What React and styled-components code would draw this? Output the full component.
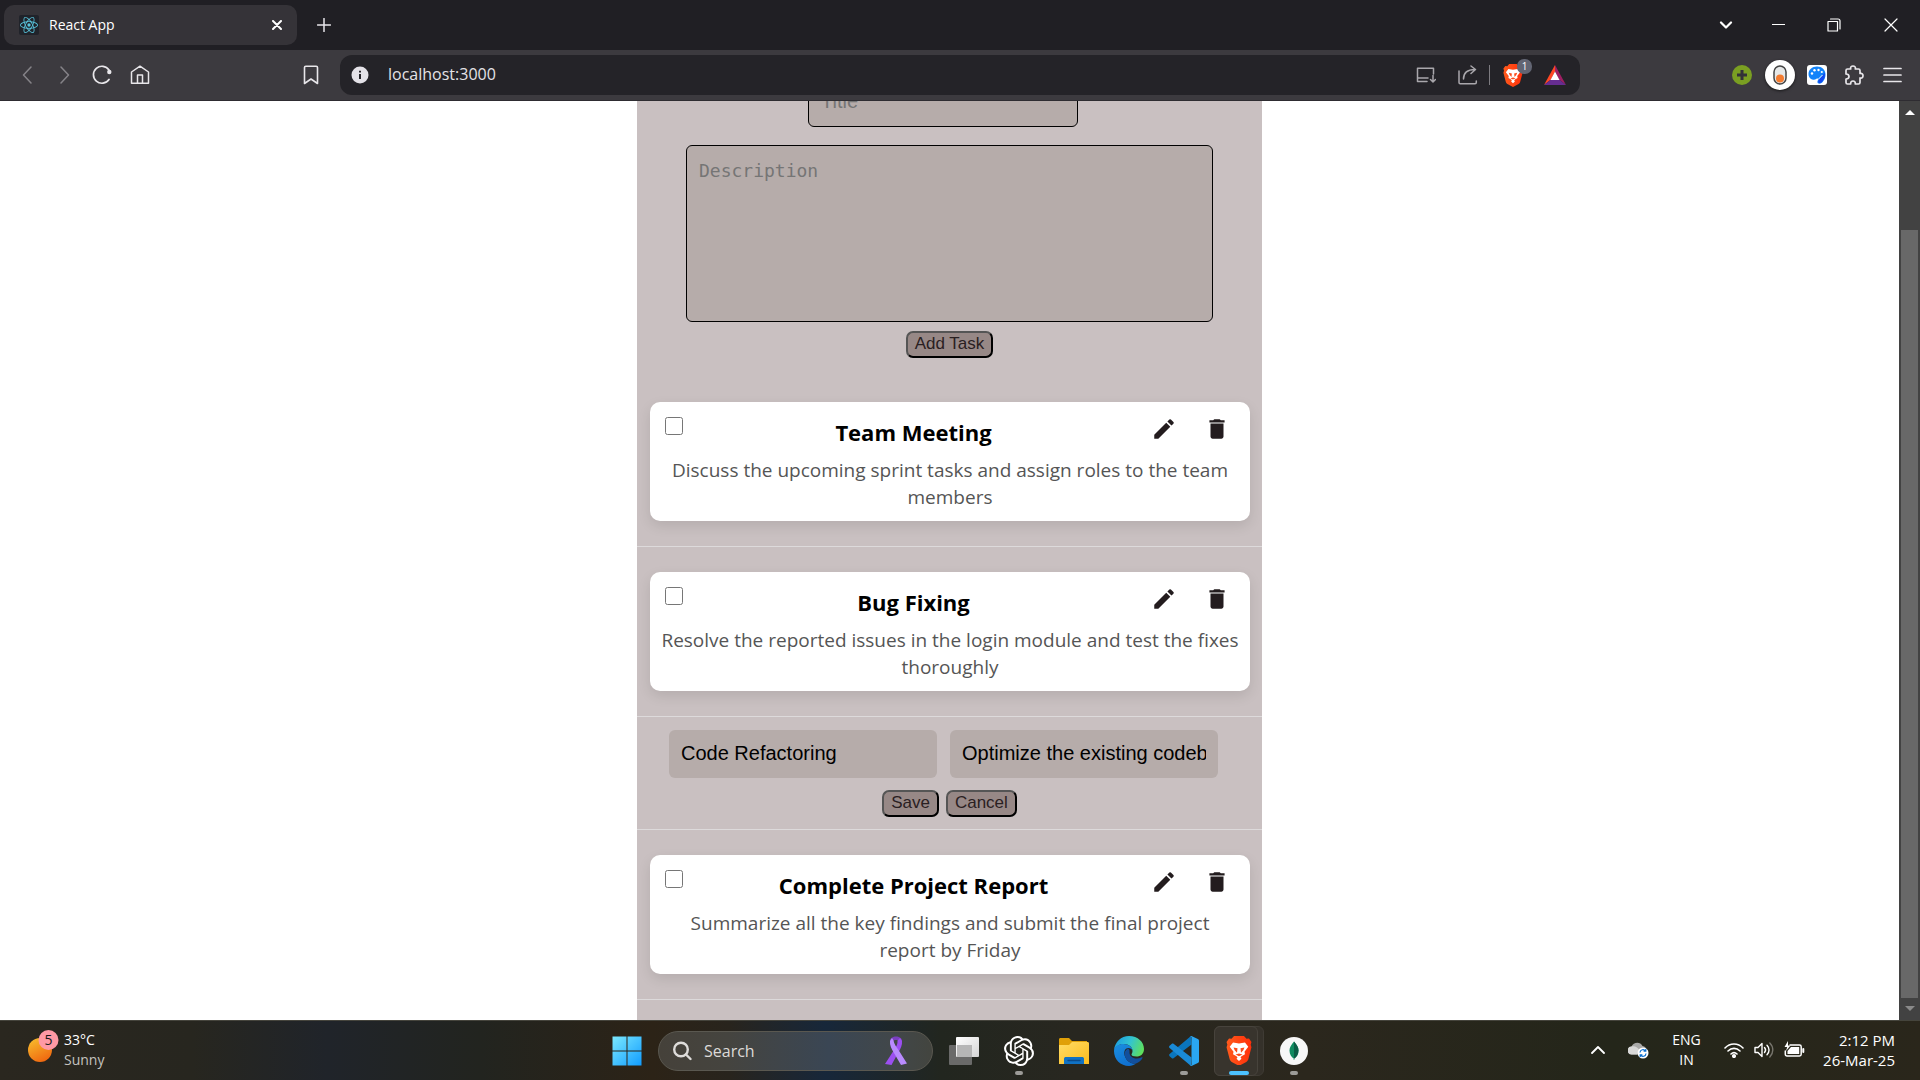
import React, { useState } from "react";
import styled, { createGlobalStyle } from "styled-components";
import { MdEdit, MdDelete } from "react-icons/md";
import { SiOpenai, SiReact } from "react-icons/si";

const ui = `"Open Sans", "Noto Sans", sans-serif`;
const arial = `"Liberation Sans", Arial, sans-serif`;

const GlobalStyle = createGlobalStyle`
  *, *::before, *::after { box-sizing: border-box; }
  body { margin: 0; background: #fff; font-family: ${ui}; }
  button { font: inherit; color: inherit; }
  svg { display: block; flex: none; }
`;

const Desktop = styled.div`
  display: flex;
  flex-direction: column;
  height: 100vh;
  overflow: hidden;
`;

/* ---------- browser chrome ---------- */

const TabStrip = styled.header`
  display: flex;
  align-items: center;
  height: 50px;
  padding-left: 4px;
  background: #201f24;
  color: #fff;
`;

const Tab = styled.div`
  display: flex;
  align-items: center;
  gap: 10px;
  width: 293px;
  height: 40px;
  padding: 0 8px 0 15px;
  border-radius: 10px;
  background: #353338;
  font-size: 14px;
  line-height: 20px;
`;

const TabTitle = styled.span`
  flex: 1;
`;

const Favicon = styled.span`
  display: grid;
  place-items: center;
  width: 20px;
  height: 20px;
  border-radius: 2px;
  background: #20232a;
  color: #58c4dc;
`;

const IconButton = styled.button`
  display: grid;
  place-items: center;
  width: ${(p) => p.$w || 38}px;
  height: ${(p) => p.$h || 40}px;
  padding: 0;
  border: 0;
  background: none;
  color: ${(p) => p.$color || "#e8e6ea"};
`;

const NewTab = styled.div`
  flex: 1;
  padding-left: 8px;
`;

const WindowControls = styled.div`
  display: flex;
`;

const Toolbar = styled.nav`
  display: flex;
  align-items: center;
  height: 51px;
  padding: 0 9px 0 8px;
  background: #3c3a3f;
  border-bottom: 1px solid #2e2c31;
`;

const NavGroup = styled.div`
  display: flex;
  flex: none;
  width: 332px;
  justify-content: space-between;
  padding-right: 10px;
`;

const NavButtons = styled.div`
  display: flex;
`;

const AddressBar = styled.div`
  display: flex;
  flex: 1;
  align-items: center;
  height: 40px;
  padding: 0 6px 0 11px;
  border-radius: 12px;
  background: #242328;
`;

const AddressInput = styled.input`
  flex: 1;
  min-width: 0;
  padding: 0 0 2px;
  margin-left: 19px;
  border: 0;
  background: none;
  color: #e4e2e6;
  font: 16px/24px ${ui};
`;

const Separator = styled.span`
  width: 1px;
  height: 20px;
  background: #7d7b80;
`;

const ShieldWrap = styled.span`
  position: relative;
  display: block;
`;

const Count = styled.span`
  position: absolute;
  top: -5px;
  right: -9px;
  width: 15px;
  height: 15px;
  border-radius: 7px;
  background: #626573;
  color: #fff;
  font-size: 10px;
  line-height: 15px;
  text-align: center;
`;

const Extensions = styled.div`
  display: flex;
  padding-left: 143px;
`;

const ExtensionDisc = styled.span`
  display: grid;
  place-items: center;
  width: 30px;
  height: 30px;
  border-radius: 50%;
  background: #fff;
  box-shadow: 0 1px 3px rgba(0, 0, 0, 0.6);
`;

/* ---------- page ---------- */

const Viewport = styled.div`
  display: flex;
  flex: 1;
  min-height: 0;
`;

const Page = styled.main`
  flex: 1;
  overflow: hidden;
  background: #fff;
`;

const Scrollbar = styled.div`
  display: flex;
  flex-direction: column;
  align-items: center;
  width: 21px;
  background: #424242;
`;

const ScrollArrow = styled.span`
  display: grid;
  place-items: center;
  height: 22px;
`;

const ScrollTrack = styled.div`
  flex: 1;
  width: 17px;
  padding-top: 107px;
`;

const ScrollThumb = styled.div`
  height: 100%;
  background: #686868;
`;

const Panel = styled.section`
  width: 625px;
  min-height: 1000px;
  margin: -24px auto 0;
  background: #c9c0c1;
  text-align: center;
`;

const TaskForm = styled.form`
  display: flex;
  flex-direction: column;
  align-items: center;
  padding-bottom: 19px;
`;

const TitleRow = styled.div`
  display: flex;
  padding-right: 13px;
`;

const TextField = styled.input`
  width: ${(p) => (p.$outlined ? 270 : 268)}px;
  height: ${(p) => (p.$outlined ? 50 : 48)}px;
  padding: 0 12px 2px;
  border: ${(p) => (p.$outlined ? "1px solid #000" : "0")};
  border-radius: 6px;
  background: #b6acaa;
  color: #000;
  font: 20px ${arial};
  &::placeholder { color: #757575; }
`;

const DescriptionField = styled.textarea`
  width: 527px;
  height: 177px;
  margin: 18px 0 9px;
  padding: 13px 12px;
  border: 1px solid #000;
  border-radius: 6px;
  background: #b6acaa;
  font: 18px/24px "DejaVu Sans Mono", monospace;
  resize: none;
  &::placeholder { color: #757575; }
`;

const ActionButton = styled.button`
  height: 27px;
  padding: 0 7px 2px;
  border: 2px outset #000;
  border-color: #555 #000 #000 #555;
  border-radius: 7px;
  background: #978886;
  color: #2a2022;
  font: 17px/20px ${arial};
`;

const TaskList = styled.ul`
  margin: 0;
  padding: 0;
  list-style: none;
`;

const TaskItem = styled.li`
  padding: ${(p) => (p.$editing ? "13px 12px 12px" : "25px 12px 25px 13px")};
  border-bottom: 1px solid #dddadb;
`;

const Card = styled.article`
  padding: 13px 11px 10px;
  border-radius: 10px;
  background: #fff;
  box-shadow: 0 5px 13px rgba(0, 0, 0, 0.1);
`;

const CardHeader = styled.div`
  display: flex;
  align-items: flex-start;
  height: 34px;
  padding: 0 2px 0 1px;
`;

const Check = styled.input`
  width: 18px;
  height: 18px;
  margin: 2px 0 0 3px;
`;

const CardTitle = styled.h3`
  flex: 1;
  margin: 0;
  font-size: 22px;
  line-height: 34px;
  color: #000;
`;

const CardActions = styled.div`
  display: flex;
  gap: 13px;
  padding-top: 1px;
`;

const CardText = styled.p`
  margin: 8px 0 0;
  color: #555;
  font-size: 19px;
  line-height: 27px;
`;

const EditFields = styled.div`
  display: flex;
  justify-content: center;
  gap: 13px;
  padding-right: 12px;
`;

const EditButtons = styled.div`
  display: flex;
  justify-content: center;
  gap: 7px;
  margin-top: 12px;
`;

/* ---------- taskbar ---------- */

const Taskbar = styled.footer`
  display: grid;
  grid-template-columns: 1fr auto 1fr;
  align-items: center;
  height: 60px;
  border-top: 1px solid #45443c;
  background: linear-gradient(90deg, #2a271f 0, #27261f 10%, #20242a 17%, #22241f 25%, #2c2317 34%, #28241d 38%, #17273a 43%, #22261f 49%, #282720 56%, #2b271d 68%, #24261a 84%, #2a261b 100%);
  color: #fff;
  font-size: 14px;
  line-height: 20px;
`;

const Weather = styled.div`
  display: flex;
  align-items: center;
  gap: 5px;
  padding: 0 0 2px 27px;
`;

const WeatherText = styled.div`
  display: flex;
  flex-direction: column;
`;

const Muted = styled.span`
  color: #c4c2bf;
`;

const Apps = styled.div`
  display: flex;
  align-items: center;
`;

const AppButton = styled.button`
  position: relative;
  display: grid;
  place-items: center;
  width: 55px;
  height: 59px;
  padding: 0;
  border: 0;
  background: none;
`;

const AppTile = styled.span`
  position: relative;
  display: grid;
  place-items: center;
  width: 50px;
  height: 50px;
  border: 1px solid #3f3b34;
  border-radius: 6px;
  background: #35312a;
  &::before {
    content: "";
    position: absolute;
    inset: -1px 5px -1px -1px;
    border: 1px solid #47433c;
    border-radius: 6px;
    background: #38342d;
  }
  svg { position: relative; }
`;

const Running = styled.span`
  position: absolute;
  bottom: 5px;
  left: 50%;
  width: ${(p) => (p.$active ? 20 : 8)}px;
  height: 4px;
  border-radius: 2px;
  background: ${(p) => (p.$active ? "#4cc2ff" : "#9c9b98")};
  transform: translateX(-50%);
`;

const SearchBox = styled.label`
  display: flex;
  align-items: center;
  gap: 12px;
  width: 275px;
  height: 40px;
  margin: 0 3px 0 4px;
  padding: 0 25px 0 13px;
  border: 1px solid #5a5850;
  border-radius: 20px;
  background: linear-gradient(90deg, #45413a 0, #45443f 25%, #3a4654 62%, #41474a 85%, #43453f 100%);
`;

const SearchInput = styled.input`
  flex: 1;
  min-width: 0;
  padding: 0;
  border: 0;
  background: none;
  color: #fff;
  font: 16px ${ui};
  &::placeholder { color: #dcdad8; opacity: 1; }
`;

const Tray = styled.div`
  display: flex;
  align-items: center;
  justify-content: flex-end;
  padding: 0 25px 2px 0;
`;

const TrayStack = styled.div`
  display: flex;
  flex-direction: column;
  align-items: ${(p) => p.$align};
  width: ${(p) => p.$w}px;
  font-size: ${(p) => p.$size || 14}px;
  white-space: nowrap;
`;

const TrayIcons = styled.div`
  display: flex;
  align-items: center;
  gap: 10px;
`;

const TrayStart = styled(TrayIcons)`
  gap: 23px;
`;

/* ---------- drawings ---------- */

const Line = ({ w = 20, h = w, box = `0 0 ${w} ${h}`, sw = 1.5, children, ...rest }) => (
  <svg width={w} height={h} viewBox={box} fill="none" stroke="currentColor" strokeWidth={sw} strokeLinecap="round" strokeLinejoin="round" {...rest}>
    {children}
  </svg>
);

const Edge = () => (
  <svg width="30" height="30" viewBox="0 0 30 30">
    <defs>
      <linearGradient id="edgeTop" x1="0" y1="0.3" x2="1" y2="0.6">
        <stop offset="0" stopColor="#1b9de2" />
        <stop offset="0.5" stopColor="#33c4d0" />
        <stop offset="1" stopColor="#5fe05a" />
      </linearGradient>
      <linearGradient id="edgeSide" x1="0" y1="0" x2="0.6" y2="1">
        <stop offset="0" stopColor="#1b8fe0" />
        <stop offset="1" stopColor="#0f6fd0" />
      </linearGradient>
    </defs>
    <path d="M0 14C1 6 7 0 15 0c9 0 15 6 15 13 0 5-3.500 7.500-7.500 7.500-3.500 0-5-1-5-2 0-.8 1-1.500 1-3.500C18.500 11 14.500 8 10 8 5 8 1 11 0 14z" fill="url(#edgeTop)" />
    <path d="M0 15C0 10 5 8 9.500 8c5 0 9 3 9 6.500-1-1.800-2.800-2.500-4-2.500-4 0-5.500 5-3 9.500C13.500 26 18 28 22 27.500c-2 1.500-4.500 2.500-7 2.500C6.500 30 0 23.500 0 15z" fill="url(#edgeSide)" />
    <path d="M14 12.500c-3 1.500-4.500 5-2.500 9 2 4.500 6.500 6.500 10.500 6 3-1 5.300-3 6.500-5.500.3-.8-.2-1-.8-.7-6 3-12.200.2-12.200-4.800 0-1.700.3-3-1.500-4z" fill="#124f9c" />
  </svg>
);

const VSCode = () => (
  <svg width="30" height="30" viewBox="0 0 30 30">
    <path d="M22.500 8.500L4.500 22.300c-.5.400-1.200.3-1.600 0L.6 20.200c-.7-.6-.7-1.600 0-2.200L22 0z" fill="#0a75bd" />
    <path d="M22.500 21.500L4.500 7.700c-.5-.4-1.200-.3-1.600 0L.6 9.800c-.7.6-.7 1.600 0 2.200L22 30z" fill="#1a8ad6" />
    <path d="M22.500 0l6.300 3c.7.300 1.200 1 1.200 1.800v20.400c0 .8-.5 1.500-1.200 1.800l-6.300 3c-.8.300-1.500 0-2-.4 1 .6 2-.1 2-1.100V1.500c0-1-1-1.700-2-1.100.5-.5 1.200-.7 2-.4z" fill="#2aa7f3" />
  </svg>
);

const Explorer = () => (
  <svg width="30" height="28" viewBox="0 0 30 28">
    <defs>
      <linearGradient id="folder" x1="0" y1="0" x2="1" y2="1">
        <stop offset="0" stopColor="#ffdc66" />
        <stop offset="1" stopColor="#fcbc1c" />
      </linearGradient>
    </defs>
    <path d="M0 2.500C0 1.500.7 1 1.500 1H10l3 3h15v6H0z" fill="#e0a008" />
    <path d="M0 8h10l3-3h15.500c1 0 1.500.7 1.500 1.500V27H0z" fill="url(#folder)" />
    <path d="M5 27v-5.500C5 20.500 6 20 7 20h16c1 0 2 .5 2 1.500V27z" fill="#1072c4" />
    <path d="M9 23.500h12" stroke="#0a4a8a" strokeWidth="1.300" strokeLinecap="round" />
  </svg>
);

const WindowsLogo = () => (
  <svg width="30" height="30" viewBox="0 0 30 30">
    <defs>
      <linearGradient id="win" gradientUnits="userSpaceOnUse" x1="0" y1="0" x2="30" y2="30">
        <stop offset="0" stopColor="#7deaff" />
        <stop offset="1" stopColor="#0f9bff" />
      </linearGradient>
    </defs>
    <path d="M.5.500h14v14H.5zM15.500.500h14v14h-14zM.5 15.500h14v14H.5zM15.500 15.500h14v14h-14z" fill="url(#win)" />
  </svg>
);

const Ribbon = () => (
  <svg width="22" height="30" viewBox="0 0 22 30">
    <path d="M5 5C5 2 8 .5 11 .5S17 2 17 5l-2.500 1C14 4.500 12.500 4 11 4s-3 .5-3.500 2z" fill="#7a3fc0" />
    <path d="M17 5c.5 4-1.500 8-4 12L6.500 29 0 28l9-14c2-3 4-6 3.500-9.500L15 2z" fill="#9b4ff0" />
    <path d="M5 5c-.5 4 1.500 8 4 12l7 12 6-1.500L13.500 14C11.500 11 9 8 8.500 4.500L7 2z" fill="#b98bff" />
  </svg>
);

const TaskView = () => (
  <svg width="30" height="28" viewBox="0 0 30 28">
    <defs>
      <linearGradient id="front" x1="0" y1="0" x2="1" y2="1">
        <stop offset="0" stopColor="#fff" />
        <stop offset="1" stopColor="#d5d5d5" />
      </linearGradient>
    </defs>
    <rect x="0" y="8" width="23" height="20" rx="1" fill="#6a6a69" />
    <rect x="7" y="0" width="23" height="20" rx="1" fill="url(#front)" />
    <path d="M8 8h15v12H8z" fill="#b6b6b6" />
  </svg>
);

const BraveApp = ({ size }) => (
  <svg width={size} height={size * 1.15} viewBox="0 0 26 30">
    <defs>
      <linearGradient id="brave" x1="0" y1="0" x2="1" y2="0">
        <stop offset="0" stopColor="#ff5a1c" />
        <stop offset="1" stopColor="#ff2f0a" />
      </linearGradient>
    </defs>
    <path d="M8 0h10l2.500 2.800 2.500-.3 2.500 3.500-.8 2.800.8 2.500-3 11.500c-.4 1.500-1 2.300-2.200 3.200L13 30l-7.300-4c-1.200-.9-1.800-1.700-2.200-3.200L.5 11.300l.8-2.500L.5 6 3 2.500l2.500.3z" fill="url(#brave)" />
    <path d="M7 6.500l6 1 6-1 3.300 4.300-3.800 5 .5 2.400-3.500 2-1 1.300 1 1.300L13 25l-2.500-2.200 1-1.300-1-1.300-3.500-2 .5-2.400-3.800-5z" fill="#fff" />
    <path d="M7.500 11.500l4 .8-.5 4.500-2.300-2.500zM18.500 11.500l-4 .8.5 4.500 2.300-2.500zM9.500 18.500l3.500-1 3.500 1-3.500 1.800z" fill="#fb4a1a" />
  </svg>
);

/* ---------- app ---------- */

const initialTasks = [
  { id: 1, title: "Team Meeting", text: "Discuss the upcoming sprint tasks and assign roles to the team members" },
  { id: 2, title: "Bug Fixing", text: "Resolve the reported issues in the login module and test the fixes thoroughly" },
  { id: 3, title: "Code Refactoring", text: "Optimize the existing codebase", editing: true },
  { id: 4, title: "Complete Project Report", text: "Summarize all the key findings and submit the final project report by Friday" },
];

function Task({ task, onChange, onRemove }) {
  const [title, setTitle] = useState(task.title);
  const [text, setText] = useState(task.text);

  if (task.editing) {
    return (
      <TaskItem $editing>
        <EditFields>
          <TextField aria-label="Title" value={title} onChange={(e) => setTitle(e.target.value)} />
          <TextField aria-label="Description" value={text} onChange={(e) => setText(e.target.value)} />
        </EditFields>
        <EditButtons>
          <ActionButton type="button" onClick={() => onChange({ ...task, title, text, editing: false })}>Save</ActionButton>
          <ActionButton type="button" onClick={() => onChange({ ...task, editing: false })}>Cancel</ActionButton>
        </EditButtons>
      </TaskItem>
    );
  }
  return (
    <TaskItem>
      <Card>
        <CardHeader>
          <Check type="checkbox" aria-label={task.title} />
          <CardTitle>{task.title}</CardTitle>
          <CardActions>
            <IconButton $w={40} $h={26} $color="#231c1e" aria-label="Edit" onClick={() => onChange({ ...task, editing: true })}>
              <MdEdit size={26} />
            </IconButton>
            <IconButton $w={40} $h={26} $color="#231c1e" aria-label="Delete" onClick={onRemove}>
              <MdDelete size={26} />
            </IconButton>
          </CardActions>
        </CardHeader>
        <CardText>{task.text}</CardText>
      </Card>
    </TaskItem>
  );
}

function Browser() {
  return (
    <>
      <TabStrip>
        <Tab>
          <Favicon><SiReact size={18} /></Favicon>
          <TabTitle>React App</TabTitle>
          <IconButton $w={24} $h={24} $color="#fff" aria-label="Close tab">
            <Line w={10} sw={2}><path d="M1 1l8 8M9 1l-8 8" /></Line>
          </IconButton>
        </Tab>
        <NewTab>
          <IconButton aria-label="New tab">
            <Line w={14}><path d="M7 .5v13M.5 7h13" /></Line>
          </IconButton>
        </NewTab>
        <WindowControls>
          <IconButton $w={48} $color="#fff" aria-label="Search tabs">
            <Line w={14} h={8} sw={2.2}><path d="M2 1.500l5 5 5-5" /></Line>
          </IconButton>
          <IconButton $w={56} $color="#fff" aria-label="Minimize">
            <Line w={13} h={2} sw={1}><path d="M0 .5h13" strokeLinecap="butt" /></Line>
          </IconButton>
          <IconButton $w={56} $color="#fff" aria-label="Restore">
            <Line w={14} sw={1.2}><path d="M1 3.500h9.500V13H1zM3.500 1H11c1.200 0 2 .8 2 2v8" /></Line>
          </IconButton>
          <IconButton $w={58} $color="#fff" aria-label="Close">
            <Line w={14} sw={1.2}><path d="M1 1l12 12M13 1L1 13" /></Line>
          </IconButton>
        </WindowControls>
      </TabStrip>
      <Toolbar>
        <NavGroup>
          <NavButtons>
            <IconButton $color="#858388" aria-label="Back">
              <Line w={10} h={18}><path d="M9 1L1.500 9 9 17" /></Line>
            </IconButton>
            <IconButton $color="#858388" aria-label="Forward">
              <Line w={10} h={18}><path d="M1 1l7.500 8L1 17" /></Line>
            </IconButton>
            <IconButton $w={36} aria-label="Reload">
              <Line w={20} sw={1.7}>
                <path d="M17 5A8.500 8.500 0 1 0 17 14.500" />
                <circle cx="17.300" cy="7" r="2.200" fill="currentColor" stroke="none" />
              </Line>
            </IconButton>
            <IconButton $w={40} aria-label="Home">
              <Line w={20} sw={1.5}><path d="M1.500 7L10 1.200 18.500 7v11.300h-17zM7.500 18v-8h5v8" /></Line>
            </IconButton>
          </NavButtons>
          <IconButton aria-label="Bookmark">
            <Line w={16} h={20} sw={1.6}><path d="M1.500 2.500c0-.8.500-1.300 1.300-1.300h10.400c.8 0 1.300.5 1.300 1.300v16L8 14l-6.500 4.500z" /></Line>
          </IconButton>
        </NavGroup>
        <AddressBar>
          <svg width="18" height="18" viewBox="0 0 18 18">
            <circle cx="9" cy="9" r="8.500" fill="#e4e2e8" />
            <path d="M9 8v5M9 4.800v1.800" stroke="#242328" strokeWidth="2" />
          </svg>
          <AddressInput aria-label="Address" defaultValue="localhost:3000" />
          <IconButton $w={42} $color="#a9a7ac" aria-label="Install app">
            <Line w={20} h={16} sw={1.5}><path d="M11 14.500H1.500v-3.500H12M1.500 11V1.200h16V7M17 8.500v6M14.500 12.500L17 15l2.500-2.500" /></Line>
          </IconButton>
          <IconButton $w={42} $color="#a9a7ac" aria-label="Share">
            <Line w={20} sw={1.5}><path d="M1 6v11.500c0 .8.400 1.200 1.200 1.200H17c.8 0 1.300-.5 1.300-1.200V16M5.500 14c0-6 4-9.500 11.500-9.500M13 1l4.500 3.500L13 8.500" /></Line>
          </IconButton>
          <Separator />
          <IconButton $w={46} aria-label="Brave Shields">
            <ShieldWrap>
              <BraveApp size={20} />
              <Count>1</Count>
            </ShieldWrap>
          </IconButton>
          <IconButton $w={38} aria-label="Rewards">
            <svg width="22" height="20" viewBox="0 0 22 20">
              <path d="M11 0v6.500L7 14.500 0 20z" fill="#ff4724" />
              <path d="M11 0v6.500l4 8 7 5.500z" fill="#9e1f63" />
              <path d="M0 20l7-5.500h8l7 5.500z" fill="#662d91" />
              <path d="M11 6.500l4.500 8.500h-9z" fill="#fff" />
            </svg>
          </IconButton>
        </AddressBar>
        <Extensions>
          <IconButton aria-label="Add extension">
            <svg width="20" height="20" viewBox="0 0 20 20">
              <circle cx="10" cy="10" r="10" fill="#7a9f22" />
              <path d="M10 5v10M5 10h10" stroke="#333238" strokeWidth="3" />
            </svg>
          </IconButton>
          <IconButton aria-label="Toggle extension">
            <ExtensionDisc>
              <svg width="14" height="20" viewBox="0 0 14 20">
                <rect x="1" y="1" width="12" height="18" rx="6" fill="#e6e8e8" stroke="#444" strokeWidth="1.500" />
                <circle cx="7" cy="13.500" r="4" fill="#f47c30" />
              </svg>
            </ExtensionDisc>
          </IconButton>
          <IconButton $w={36} aria-label="Palette extension">
            <svg width="20" height="20" viewBox="0 0 20 20">
              <rect width="20" height="20" rx="3" fill="#fff" />
              <path d="M10 1.500c5 0 8.500 3.500 8.500 8 0 3-1 5-2.500 7-1.200 1.700-2.800 2.500-4.500 2-1.500-.5-1.200-2.300-.5-3.500.5-1-.2-1.800-1.500-1.300-1.500.8-3.500 1.800-5.500.3C2.300 12.800 1.500 11 1.500 9c0-4.300 3.500-7.500 8.500-7.500z" fill="#1283fa" />
              <path d="M17.800 7.500c.5 3.500-.5 6.500-2.500 9-1 1.300-2.500 1.800-3.600 1.300-.8-.6-.5-1.800.3-3z" fill="#1148f0" />
              <g fill="#fff"><circle cx="5" cy="8.500" r="1.200" /><circle cx="7.500" cy="5.300" r="1.200" /><circle cx="11.500" cy="5" r="1.200" /><circle cx="14.800" cy="7" r="1.100" /></g>
              <path d="M15.500 10l-4.500 4.500" stroke="#fff" strokeWidth="1" />
            </svg>
          </IconButton>
          <IconButton aria-label="Extensions">
            <Line w={20} sw={1.7}><path d="M2 5.500c0-1 .5-1.500 1.500-1.500h3.200C6 2 7.500 1 9 1s3 1 2.300 3h3.200c1 0 1.500.5 1.500 1.500v3c2-.6 3 .8 3 2.200s-1 3-3 2.300v4.500c0 1-.5 1.500-1.500 1.500h-3.200c.2-2-.8-3-2.300-3s-2.600 1-2.300 3H3.500C2.500 19 2 18.500 2 17.500V14c2 0 3-.8 3-2.500S4 9 2 9z" /></Line>
          </IconButton>
          <IconButton aria-label="Menu">
            <Line w={19} h={16} sw={1.7}><path d="M1 1.500h17M1 8h17M1 14.500h17" /></Line>
          </IconButton>
        </Extensions>
      </Toolbar>
    </>
  );
}

function SystemBar() {
  return (
    <Taskbar>
      <Weather>
        <svg width="32" height="40" viewBox="0 0 32 40">
          <defs>
            <linearGradient id="sun" x1="0.200" y1="0" x2="0.700" y2="1">
              <stop offset="0" stopColor="#f7bb2c" />
              <stop offset="1" stopColor="#f0650f" />
            </linearGradient>
          </defs>
          <circle cx="13" cy="20" r="12" fill="url(#sun)" />
          <circle cx="21.500" cy="10" r="10" fill="#ff99a4" />
          <text x="21.500" y="15" textAnchor="middle" fontSize="14" fontFamily="Open Sans, sans-serif" fill="#1a1a1a">5</text>
        </svg>
        <WeatherText>
          <span>33°C</span>
          <Muted>Sunny</Muted>
        </WeatherText>
      </Weather>
      <Apps>
        <AppButton aria-label="Start"><WindowsLogo /></AppButton>
        <SearchBox>
          <Line w={20} sw={2.4} color="#dedcda"><circle cx="9" cy="8.500" r="6.800" /><path d="M14 13.500l4.500 4.500" /></Line>
          <SearchInput placeholder="Search" aria-label="Search" />
          <Ribbon />
        </SearchBox>
        <AppButton aria-label="Task view"><TaskView /></AppButton>
        <AppButton aria-label="ChatGPT"><SiOpenai size={30} color="#fff" /><Running /></AppButton>
        <AppButton aria-label="File Explorer"><Explorer /></AppButton>
        <AppButton aria-label="Edge"><Edge /></AppButton>
        <AppButton aria-label="Visual Studio Code"><VSCode /><Running /></AppButton>
        <AppButton aria-label="Brave"><AppTile><BraveApp size={26} /></AppTile><Running $active /></AppButton>
        <AppButton aria-label="MongoDB Compass">
          <svg width="28" height="28" viewBox="0 0 28 28">
            <circle cx="14" cy="14" r="14" fill="#f7f7f7" />
            <path d="M14 4.500c3 3.500 4.500 6 4.500 9 0 4-2 6.500-4.200 8V23h-.6v-1.500c-2.200-1.500-4.200-4-4.200-8 0-3 1.500-5.500 4.500-9z" fill="#0f8a5f" />
            <path d="M14 4.500c3 3.500 4.500 6 4.500 9 0 4-2 6.500-4.200 8H14z" fill="#0b5c45" />
          </svg>
          <Running />
        </AppButton>
      </Apps>
      <Tray>
        <TrayStart>
          <Line w={14} h={9} sw={1.8}><path d="M1 8l6-6 6 6" /></Line>
          <svg width="21" height="18" viewBox="0 0 21 18">
            <path d="M4 13.500a4 4 0 0 1-.5-8C5 1.500 12 0 14.500 5c3 .3 4.500 3 3.500 6l-4 2.500z" fill="#a9a9a8" />
            <path d="M4 13.500a4 4 0 0 1-.5-8c3-1 6 .5 7.500 3l-2 5z" fill="#d8d8d7" />
            <circle cx="15" cy="12" r="5.500" fill="#fff" />
            <path d="M12 11.500a3 3 0 0 1 5.500-1.500M18 12.500a3 3 0 0 1-5.500 1.500M17.800 8v2.200h-2.200M12.200 16v-2.200h2.200" stroke="#0a6fd0" strokeWidth="1.200" fill="none" />
          </svg>
        </TrayStart>
        <TrayStack $w={75} $align="center">
          <span>ENG</span>
          <span>IN</span>
        </TrayStack>
        <TrayIcons>
          <Line w={20} h={16} sw={1.6}>
            <path d="M1 6c5-5.300 13-5.300 18 0M4 9c3.500-3.500 8.500-3.500 12 0M7 12c1.800-1.700 4.200-1.700 6 0" />
            <circle cx="10" cy="14" r="1.300" fill="currentColor" />
          </Line>
          <Line w={20} h={16} sw={1.4}>
            <path d="M1 5.500h3l4-4v13l-4-4H1zM10.500 5.500c1.300 1.500 1.300 3.500 0 5M13 3.200c2.700 2.700 2.700 6.900 0 9.600" />
            <path d="M15.800 1c4 4 4 10 0 14" stroke="#77756d" />
          </Line>
          <Line w={21} h={18} sw={1.5}>
            <path d="M6 4h9.500c1 0 1.700.7 1.700 1.700v7.600c0 1-.7 1.700-1.700 1.700H3c-1 0-1.700-.7-1.700-1.700V10" />
            <path d="M7 6h8.200v7H3.500v-3z" fill="currentColor" stroke="none" />
            <path d="M19.300 8v3" strokeWidth="2" />
            <path d="M4 0L.5 6h2.700L2 10l4.500-5.500H4z" fill="currentColor" stroke="none" />
          </Line>
        </TrayIcons>
        <TrayStack $w={90} $align="flex-end" $size={15}>
          <span>2:12 PM</span>
          <span>26-Mar-25</span>
        </TrayStack>
      </Tray>
    </Taskbar>
  );
}

export default function App() {
  const [tasks, setTasks] = useState(initialTasks);
  return (
    <Desktop>
      <GlobalStyle />
      <Browser />
      <Viewport>
        <Page>
          <Panel>
            <TaskForm onSubmit={(e) => e.preventDefault()}>
              <TitleRow>
                <TextField $outlined placeholder="Title" aria-label="Title" />
              </TitleRow>
              <DescriptionField placeholder="Description" aria-label="Description" />
              <ActionButton type="submit">Add Task</ActionButton>
            </TaskForm>
            <TaskList>
              {tasks.map((task) => (
                <Task
                  key={task.id}
                  task={task}
                  onChange={(next) => setTasks(tasks.map((t) => (t.id === next.id ? next : t)))}
                  onRemove={() => setTasks(tasks.filter((t) => t.id !== task.id))}
                />
              ))}
            </TaskList>
          </Panel>
        </Page>
        <Scrollbar>
          <ScrollArrow>
            <svg width="10" height="6" viewBox="0 0 10 6"><path d="M0 6l5-5 5 5z" fill="#fff" /></svg>
          </ScrollArrow>
          <ScrollTrack><ScrollThumb /></ScrollTrack>
          <ScrollArrow>
            <svg width="10" height="6" viewBox="0 0 10 6"><path d="M0 0l5 5 5-5z" fill="#8a8a8a" /></svg>
          </ScrollArrow>
        </Scrollbar>
      </Viewport>
      <SystemBar />
    </Desktop>
  );
}
